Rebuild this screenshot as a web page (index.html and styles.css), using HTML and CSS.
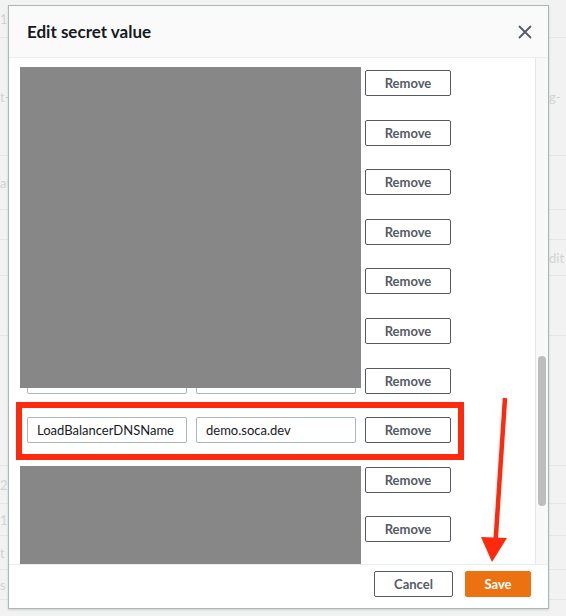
FILE: index.html
```html
<!DOCTYPE html>
<html>
<head>
<meta charset="utf-8">
<link rel="stylesheet" href="styles.css">
</head>
<body>
<div class="page">
  <div class="bg-table">
    <div class="bg-row h1"><span class="l">1</span><span class="r"></span></div>
    <div class="bg-row h2"><span class="l">t-</span><span class="r">g-</span></div>
    <div class="bg-row h3"><span class="l">at</span><span class="r"></span></div>
    <div class="bg-row h4"><span class="l"></span><span class="r"></span></div>
    <div class="bg-row h5"><span class="l"></span><span class="r">dit</span></div>
    <div class="bg-row h6"><span class="l"></span><span class="r"></span></div>
    <div class="bg-row h7"><span class="l"></span><span class="r"></span></div>
    <div class="bg-row h8"><span class="l">2</span><span class="r"></span></div>
    <div class="bg-row h9"><span class="l">1</span><span class="r"></span></div>
    <div class="bg-row h10"><span class="l">t</span><span class="r"></span></div>
    <div class="bg-row h11"><span class="l">s</span><span class="r"></span></div>
  </div>

  <div class="modal">
    <div class="modal-header">
      <h2 class="modal-title">Edit secret value</h2>
      <button class="close" aria-label="Close">
        <svg width="14" height="14" viewBox="0 0 14 14"><path d="M1.5 1.5 L12.5 12.5 M12.5 1.5 L1.5 12.5" stroke="#545b64" stroke-width="1.8" fill="none" stroke-linecap="round"/></svg>
      </button>
    </div>
    <div class="modal-body">
      <div class="scroll-content">
        <div class="row"><input class="field" value="key"><input class="field" value="value"><button class="btn">Remove</button></div>
        <div class="row"><input class="field" value="key"><input class="field" value="value"><button class="btn">Remove</button></div>
        <div class="row"><input class="field" value="key"><input class="field" value="value"><button class="btn">Remove</button></div>
        <div class="row"><input class="field" value="key"><input class="field" value="value"><button class="btn">Remove</button></div>
        <div class="row"><input class="field" value="key"><input class="field" value="value"><button class="btn">Remove</button></div>
        <div class="row"><input class="field" value="key"><input class="field" value="value"><button class="btn">Remove</button></div>
        <div class="row"><input class="field" value="key"><input class="field" value="value"><button class="btn">Remove</button></div>
        <div class="row"><input class="field" value="LoadBalancerDNSName"><input class="field" value="demo.soca.dev"><button class="btn">Remove</button></div>
        <div class="row"><input class="field" value="key"><input class="field" value="value"><button class="btn">Remove</button></div>
        <div class="row"><input class="field" value="key"><input class="field" value="value"><button class="btn">Remove</button></div>

        <div class="redact redact-top"></div>
        <div class="redact redact-bottom"></div>
        <div class="highlight"></div>
      </div>
      <div class="scrollbar"><div class="thumb"></div></div>
    </div>
    <div class="modal-footer">
      <button class="btn cancel">Cancel</button>
      <button class="btn primary">Save</button>
    </div>
  </div>

  <svg class="arrow" width="566" height="616" viewBox="0 0 566 616">
    <path d="M505 398 L495.5 542" stroke="#ff2a0d" stroke-width="4.5" fill="none"/>
    <polygon points="481,537 507,538 492,562" fill="#ff2a0d"/>
  </svg>
</div>
</body>
</html>
```

FILE: styles.css
```css
* { box-sizing: border-box; }

html, body {
  margin: 0;
  padding: 0;
}

body {
  background: #f2f2f2;
  font-family: Lato, "Liberation Sans", sans-serif;
  width: 566px;
  height: 616px;
  overflow: hidden;
}

.page {
  position: relative;
  width: 566px;
  height: 616px;
}

/* faint page behind the modal */
.bg-table {
  display: flex;
  flex-direction: column;
}

.bg-row {
  display: flex;
  justify-content: space-between;
  align-items: center;
  border-bottom: 1px solid #e6e6e6;
  color: #d2d2d2;
  font-size: 13px;
}

.bg-row .l { width: 10px; overflow: hidden; white-space: nowrap; }
.bg-row .r { width: 17px; overflow: hidden; white-space: nowrap; }

.h1 { height: 38px; }
.h2 { height: 118px; }
.h3 { height: 54px; }
.h4 { height: 30px; }
.h5 { height: 36px; }
.h6 { height: 60px; }
.h7 { height: 130px; }
.h8 { height: 38px; }
.h9 { height: 32px; }
.h10 { height: 34px; }
.h11 { height: 30px; }

/* modal */
.modal {
  position: absolute;
  left: 8px;
  top: 5px;
  width: 541px;
  height: 604px;
  background: #fff;
  border: 1px solid #aab7b8;
  box-shadow: 0 1px 2px rgba(0,0,0,0.15);
  display: flex;
  flex-direction: column;
}

.modal-header {
  height: 52px;
  flex: none;
  background: #fafafa;
  border-bottom: 1px solid #eaeded;
  display: flex;
  align-items: center;
  justify-content: space-between;
  padding: 0 16px 0 18px;
}

.modal-title {
  margin: 0;
  font-size: 17px;
  font-weight: 700;
  color: #16191f;
}

.close {
  border: 0;
  background: none;
  padding: 0;
  width: 14px;
  height: 14px;
  display: flex;
}

.modal-body {
  flex: 1;
  display: flex;
  min-height: 0;
}

.scroll-content {
  position: relative;
  flex: 1;
  overflow: hidden;
  padding: 12px 0 0 18px;
  display: flex;
  flex-direction: column;
  gap: 23.6px;
}

.row {
  display: flex;
  gap: 9px;
  height: 26px;
  flex: none;
}

.field {
  width: 160px;
  height: 26px;
  border: 1px solid #aab7b8;
  border-radius: 2px;
  padding: 0 9px;
  font-family: Lato, "Liberation Sans", sans-serif;
  font-size: 13px;
  color: #16191f;
  background: #fff;
  outline: none;
}

.btn {
  height: 26px;
  padding: 0;
  border: 1px solid #545b64;
  border-radius: 2px;
  background: #fff;
  color: #545b64;
  font-family: Lato, "Liberation Sans", sans-serif;
  font-size: 13px;
  font-weight: 700;
  line-height: 24px;
  text-align: center;
}

.row .btn { width: 86px; }

.redact {
  position: absolute;
  left: 11px;
  width: 341px;
  background: #878787;
}

.redact-top { top: 9px; height: 321px; }
.redact-bottom { top: 408px; height: 200px; }

.highlight {
  position: absolute;
  left: 7px;
  top: 344px;
  width: 448px;
  height: 58px;
  border: 6px solid #ff2a0d;
}

.scrollbar {
  width: 13px;
  flex: none;
  background: #f8f8f8;
  border-left: 1px solid #e6e6e6;
  padding: 298px 0 0 2px;
}

.thumb {
  width: 8px;
  height: 150px;
  border-radius: 4px;
  background: #bdbdbd;
}

.modal-footer {
  height: 44px;
  flex: none;
  border-top: 1px solid #eaeded;
  display: flex;
  justify-content: flex-end;
  align-items: flex-start;
  gap: 12px;
  padding: 6px 17px 0 0;
}

.modal-footer .cancel { width: 79px; }

.modal-footer .primary {
  width: 66px;
  background: #ec7211;
  border-color: #ec7211;
  color: #fff;
}

.arrow {
  position: absolute;
  left: 0;
  top: 0;
  pointer-events: none;
}
```
